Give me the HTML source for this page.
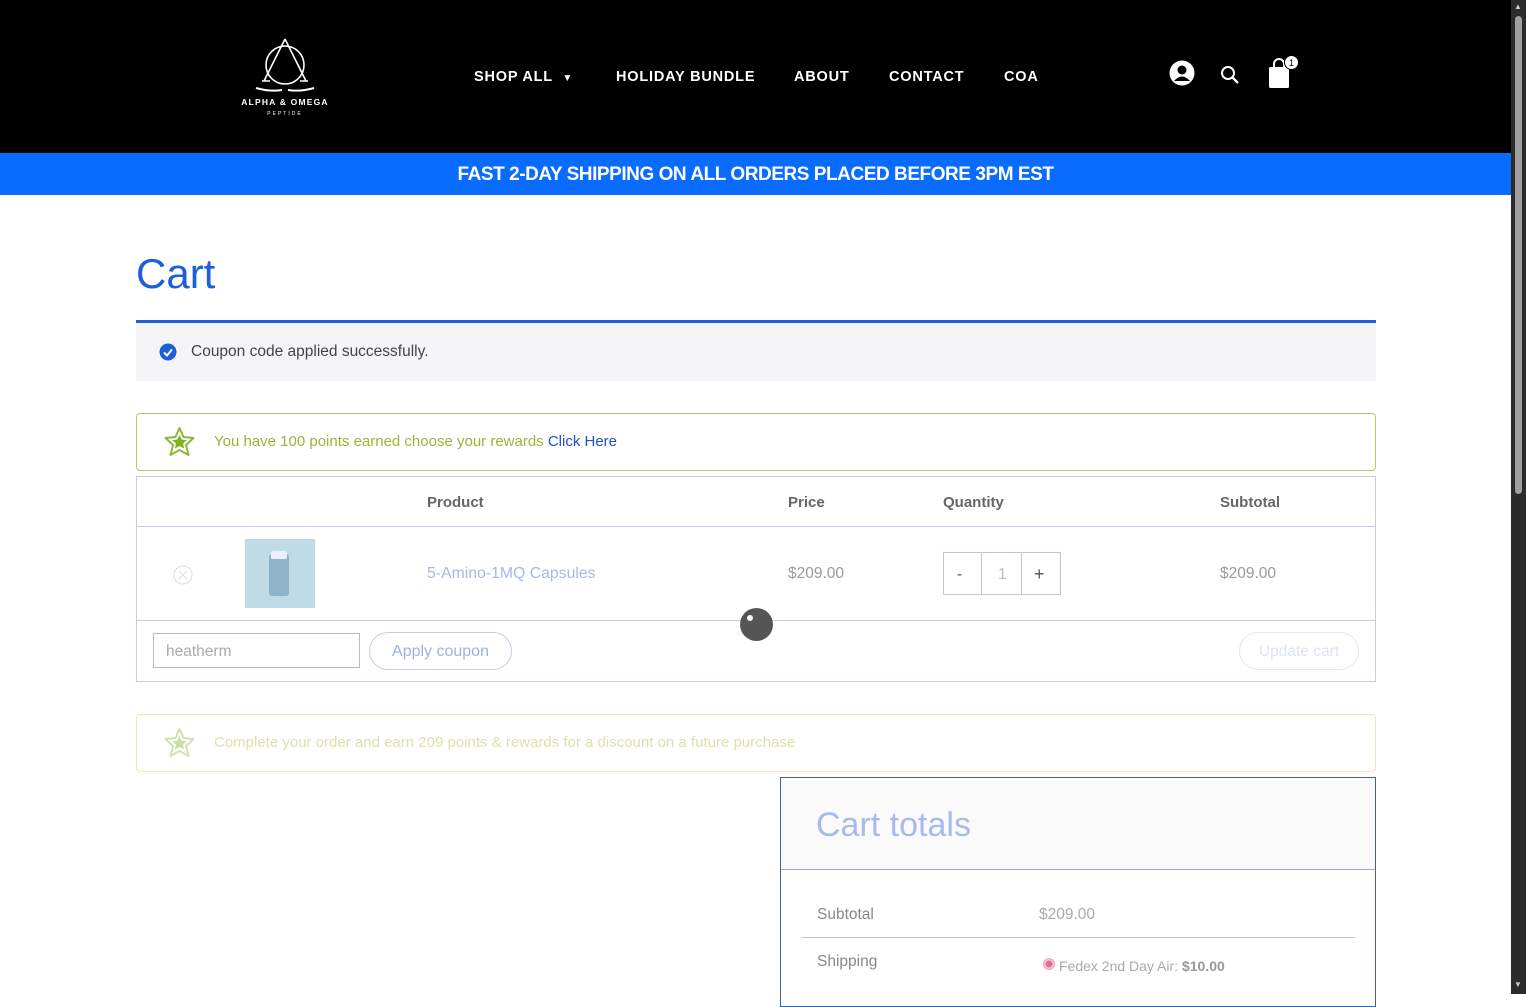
<!DOCTYPE html>
<html><head><meta charset="utf-8"><style>
*{margin:0;padding:0;box-sizing:border-box}
body{width:1526px;height:994px;overflow:hidden;background:#fff;font-family:"Liberation Sans",sans-serif;position:relative}
.abs{position:absolute}
.hdr{left:0;top:0;width:1511px;height:153px;background:#000}
.nav{top:69px;color:#fff;font-weight:bold;font-size:14.5px;letter-spacing:.8px}
.bar{left:0;top:153px;width:1511px;height:42px;background:#0a6cff;color:#fff;font-size:19px;font-weight:bold;text-align:center;line-height:43px;letter-spacing:-.45px}
.sb{left:1511px;top:0;width:15px;height:994px;background:#2b2b2b}
.th{top:494px;font-size:15px;font-weight:bold;color:#666}
.td{font-size:15.5px;color:#999}
</style></head><body>
<div class="abs hdr"></div>
<svg class="abs" style="left:236px;top:36px" width="100" height="82" viewBox="0 0 100 82">
<g fill="none" stroke="#fff" stroke-width="1.6"><circle cx="49" cy="29" r="19"/><path d="M49 3 L28 45 M49 3 L70 45 M34 45 h-8 M64 45 h8"/></g>
<path d="M20 52 q14 4 26 2 M78 52 q-14 4 -26 2" stroke="#fff" stroke-width="2" fill="none"/>
<text x="49" y="69" fill="#fff" font-size="8.5" font-weight="bold" text-anchor="middle" font-family="Liberation Sans" letter-spacing="1.2">ALPHA &amp; OMEGA</text>
<text x="49" y="79" fill="#fff" font-size="5" text-anchor="middle" font-family="Liberation Sans" letter-spacing="2">PEPTIDE</text>
</svg>
<div class="abs nav" style="left:474px">SHOP ALL &nbsp;<span style="font-size:10px">▼</span></div>
<div class="abs nav" style="left:616px">HOLIDAY BUNDLE</div>
<div class="abs nav" style="left:794px">ABOUT</div>
<div class="abs nav" style="left:889px">CONTACT</div>
<div class="abs nav" style="left:1004px">COA</div>
<svg class="abs" style="left:1169px;top:60px" width="26" height="26" viewBox="0 0 26 26"><circle cx="13" cy="13" r="12.5" fill="#fff"/><circle cx="13" cy="10" r="4.5" fill="#000"/><path d="M5 21 q8-9 16 0" fill="#000"/></svg>
<svg class="abs" style="left:1220px;top:65px" width="20" height="20" viewBox="0 0 20 20"><circle cx="8" cy="8" r="6" fill="none" stroke="#fff" stroke-width="2"/><path d="M12.5 12.5 L18 18" stroke="#fff" stroke-width="2.4"/></svg>
<svg class="abs" style="left:1266px;top:54px" width="36" height="36" viewBox="0 0 36 36"><rect x="3" y="13" width="20" height="21" rx="1.5" fill="#fff"/><path d="M8 14 v-4 a5 5 0 0 1 10 0 v4" fill="none" stroke="#fff" stroke-width="2"/><circle cx="25.5" cy="8.5" r="7" fill="#fff" stroke="#000" stroke-width="1"/><text x="25.5" y="12" font-size="9" text-anchor="middle" font-family="Liberation Sans">1</text></svg>
<div class="abs bar">FAST 2-DAY SHIPPING ON ALL ORDERS PLACED BEFORE 3PM EST</div>
<div class="abs sb"><div style="position:absolute;left:4px;top:16px;width:7px;height:478px;background:#9f9f9f;border-radius:4px"></div><div style="position:absolute;left:3px;top:2px;color:#ccc;font-size:8px">▲</div><div style="position:absolute;left:3px;top:980px;color:#ccc;font-size:8px">▼</div></div>
<div class="abs" style="left:136px;top:250px;font-size:42px;color:#1d5fd6;font-weight:500">Cart</div>
<div class="abs" style="left:136px;top:320px;width:1240px;height:61px;background:#f5f5f7;border-top:3px solid #1d5fd6"></div>
<svg class="abs" style="left:159px;top:343px" width="18" height="18" viewBox="0 0 18 18"><circle cx="9" cy="9" r="8.5" fill="#1d5fd6"/><path d="M5 9.5 l3 3 l5-6" stroke="#fff" stroke-width="2" fill="none"/></svg>
<div class="abs" style="left:191px;top:343px;font-size:15.5px;color:#444">Coupon code applied successfully.</div>
<div class="abs" style="left:136px;top:413px;width:1240px;height:58px;border:1px solid #b5c96a;border-radius:4px"></div>
<svg class="abs" style="left:163px;top:426px" width="33" height="32" viewBox="0 0 32 32"><path d="M16 2 l4 9 10 1 -7.5 7 2.5 10 -9-5 -9 5 2.5-10 -7.5-7 10-1z" fill="none" stroke="#8bb83a" stroke-width="2" stroke-linejoin="round"/><path d="M16 9 l2.3 4.5 5 .6 -3.7 3.4 1 5 -4.6-2.5 -4.6 2.5 1-5 -3.7-3.4 5-.6z" fill="#7fb21e"/></svg>
<div class="abs" style="left:214px;top:433px;font-size:15px;color:#9ab43a">You have 100 points earned choose your rewards <span style="color:#1d4fc9">Click Here</span></div>
<div class="abs" style="left:136px;top:476px;width:1240px;height:206px;border:1px solid #c9cbe6"></div>
<div class="abs" style="left:137px;top:526px;width:1238px;height:1px;background:#c9cbe6"></div>
<div class="abs" style="left:137px;top:620px;width:1238px;height:1px;background:#c9cbe6"></div>
<div class="abs th" style="left:427px">Product</div>
<div class="abs th" style="left:788px">Price</div>
<div class="abs th" style="left:943px">Quantity</div>
<div class="abs th" style="left:1220px">Subtotal</div>
<svg class="abs" style="left:173px;top:565px" width="20" height="20" viewBox="0 0 20 20"><circle cx="10" cy="10" r="9" fill="none" stroke="#ddd"/><path d="M6 6 l8 8 M14 6 l-8 8" stroke="#ddd"/></svg>
<div class="abs" style="left:245px;top:539px;width:70px;height:69px;background:#bfdbe6"><div style="position:absolute;left:24px;top:15px;width:20px;height:42px;background:#8fb3c8;border-radius:3px"></div><div style="position:absolute;left:26px;top:12px;width:16px;height:8px;background:#eef;border-radius:2px"></div></div>
<div class="abs td" style="left:427px;top:565px;color:#a7b8e6;font-size:15.8px">5-Amino-1MQ Capsules</div>
<div class="abs td" style="left:788px;top:565px">$209.00</div>
<div class="abs" style="left:943px;top:552px;width:118px;height:43px;border:1px solid #b9c4e6"></div>
<div class="abs" style="left:981px;top:553px;width:1px;height:41px;background:#b9c4e6"></div>
<div class="abs" style="left:1021px;top:553px;width:1px;height:41px;background:#b9c4e6"></div>
<div class="abs td" style="left:957px;top:566px;color:#555">-</div>
<div class="abs td" style="left:998px;top:566px;color:#bbb">1</div>
<div class="abs td" style="left:1034px;top:564px;color:#555;font-size:18px">+</div>
<div class="abs td" style="left:1220px;top:565px">$209.00</div>
<div class="abs" style="left:740px;top:608px;width:33px;height:33px;border-radius:50%;background:#555"><div style="position:absolute;left:7px;top:7px;width:6px;height:6px;border-radius:50%;background:#fff"></div></div>
<div class="abs" style="left:153px;top:633px;width:207px;height:35px;border:1px solid #bbb"></div>
<div class="abs td" style="left:166px;top:643px;color:#aaa">heatherm</div>
<div class="abs" style="left:369px;top:632px;width:143px;height:38px;border:1px solid #c3ccee;border-radius:19px;color:#9fb0e6;font-size:16px;text-align:center;line-height:37px">Apply coupon</div>
<div class="abs" style="left:1239px;top:632px;width:120px;height:38px;border:1px solid #e3e7f6;border-radius:19px;color:#dde3f5;font-size:15.5px;text-align:center;line-height:37px">Update cart</div>
<div class="abs" style="left:136px;top:714px;width:1240px;height:58px;border:1px solid #ece9b8;border-radius:4px"></div>
<svg class="abs" style="left:163px;top:727px" width="33" height="32" viewBox="0 0 32 32" opacity=".4"><path d="M16 2 l4 9 10 1 -7.5 7 2.5 10 -9-5 -9 5 2.5-10 -7.5-7 10-1z" fill="none" stroke="#8bb83a" stroke-width="2" stroke-linejoin="round"/><path d="M16 9 l2.3 4.5 5 .6 -3.7 3.4 1 5 -4.6-2.5 -4.6 2.5 1-5 -3.7-3.4 5-.6z" fill="#7fb21e"/></svg>
<div class="abs" style="left:214px;top:734px;font-size:15px;color:#dfe0a8">Complete your order and earn 209 points &amp; rewards for a discount on a future purchase</div>
<div class="abs" style="left:780px;top:777px;width:596px;height:230px;border:1px solid #3b5fb0"></div>
<div class="abs" style="left:781px;top:778px;width:594px;height:92px;background:#fafafa;border-bottom:1px solid #9aa9d4"></div>
<div class="abs" style="left:816px;top:806px;font-size:34px;color:#a8b9ee">Cart totals</div>
<div class="abs td" style="left:817px;top:906px;color:#888">Subtotal</div>
<div class="abs td" style="left:1039px;top:906px;color:#aaa">$209.00</div>
<div class="abs" style="left:801px;top:937px;width:554px;height:1px;background:#c5c3d8"></div>
<div class="abs td" style="left:817px;top:953px;color:#888">Shipping</div>
<div class="abs" style="left:1043px;top:958px;width:12px;height:12px;border-radius:50%;border:1px solid #eaa;background:radial-gradient(#e07090 45%,#fbe 50%)"></div>
<div class="abs" style="left:1059px;top:958px;font-size:14px;color:#aaa">Fedex 2nd Day Air: <b style="color:#999">$10.00</b></div>
</body></html>
